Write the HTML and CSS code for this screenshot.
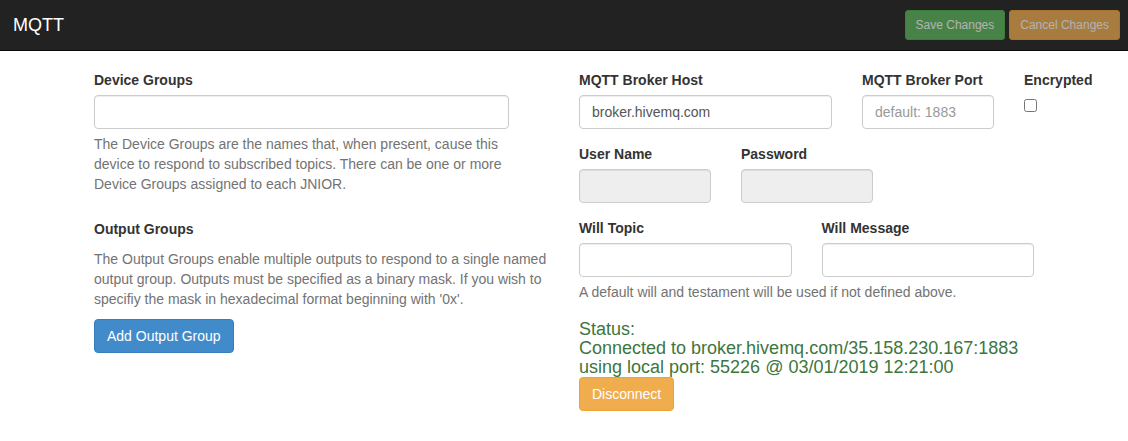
FILE: index.html
```html
<!DOCTYPE html>
<html lang="en">
<head>
  <meta charset="UTF-8" />
  <meta name="viewport" content="width=device-width, initial-scale=1.0"/>
  <title>MQTT</title>
  <link rel="stylesheet" href="styles.css">
</head>
<body>

  <header class="navbar">
    <span class="brand">MQTT</span>
    <div class="nav-actions">
      <button class="btn btn-sm btn-success" disabled>Save Changes</button>
      <button class="btn btn-sm btn-warning" disabled>Cancel Changes</button>
    </div>
  </header>

  <main class="page">
    <section class="col">
      <div class="form-group narrow">
        <label for="deviceGroups">Device Groups</label>
        <input type="text" id="deviceGroups" class="form-control">
        <p class="help-block">The Device Groups are the names that, when present, cause this device to respond to subscribed topics. There can be one or more Device Groups assigned to each JNIOR.</p>
      </div>

      <div class="form-group">
        <label>Output Groups</label>
        <p class="help-block">The Output Groups enable multiple outputs to respond to a single named output group. Outputs must be specified as a binary mask. If you wish to specifiy the mask in hexadecimal format beginning with '0x'.</p>
        <button class="btn btn-primary">Add Output Group</button>
      </div>
    </section>

    <section class="col">
      <div class="row">
        <div class="form-group w-host">
          <label for="host">MQTT Broker Host</label>
          <input type="text" id="host" class="form-control" value="broker.hivemq.com">
        </div>
        <div class="form-group w-small">
          <label for="port">MQTT Broker Port</label>
          <input type="text" id="port" class="form-control" placeholder="default: 1883">
        </div>
        <div class="form-group w-check">
          <label for="encrypted">Encrypted</label>
          <input type="checkbox" id="encrypted" class="check">
        </div>
      </div>

      <div class="row">
        <div class="form-group w-small">
          <label for="user">User Name</label>
          <input type="text" id="user" class="form-control" readonly>
        </div>
        <div class="form-group w-small">
          <label for="pass">Password</label>
          <input type="password" id="pass" class="form-control" readonly>
        </div>
      </div>

      <div class="form-group">
        <div class="row">
          <div class="w-half">
            <label for="willTopic">Will Topic</label>
            <input type="text" id="willTopic" class="form-control">
          </div>
          <div class="w-half">
            <label for="willMessage">Will Message</label>
            <input type="text" id="willMessage" class="form-control">
          </div>
        </div>
        <p class="help-block">A default will and testament will be used if not defined above.</p>
      </div>

      <div class="status">
        Status:<br>
        Connected to broker.hivemq.com/35.158.230.167:1883<br>
        using local port: 55226 @ 03/01/2019 12:21:00
      </div>
      <button class="btn btn-warning">Disconnect</button>
    </section>
  </main>

</body>
</html>
```

FILE: styles.css
```css
* {
  box-sizing: border-box;
}

body {
  margin: 0;
  font-family: "Liberation Sans", Arial, sans-serif;
  font-size: 14px;
  line-height: 20px;
  color: #333;
  background: #fff;
}

/* Top bar */
.navbar {
  height: 51px;
  background: #222;
  border-bottom: 1px solid #080808;
  display: flex;
  align-items: flex-start;
  justify-content: space-between;
  margin-bottom: 19px;
}

.brand {
  color: #fff;
  font-size: 18px;
  line-height: 20px;
  padding: 15px 13px;
}

.nav-actions {
  display: flex;
  gap: 4px;
  padding: 10px 8px 0 0;
}

/* Buttons */
.btn {
  display: inline-block;
  font-family: inherit;
  font-size: 14px;
  line-height: 20px;
  padding: 6px 12px;
  border: 1px solid transparent;
  border-radius: 4px;
  color: #fff;
  cursor: pointer;
}

.btn-sm {
  font-size: 12px;
  line-height: 18px;
  padding: 5px 10px;
  border-radius: 3px;
}

.btn[disabled] {
  opacity: 0.65;
  cursor: not-allowed;
}

.btn-primary {
  background: #428bca;
  border-color: #357ebd;
}

.btn-success {
  background: #5cb85c;
  border-color: #4cae4c;
}

.btn-warning {
  background: #f0ad4e;
  border-color: #eea236;
}

/* Layout */
.page {
  width: 940px;
  margin: 0 auto;
  display: flex;
  gap: 30px;
}

.col {
  width: 455px;
}

.row {
  display: flex;
  gap: 30px;
}

.narrow { width: 415px; display: flow-root; }
.w-host { width: 253px; }
.w-small { width: 132px; }
.w-half { width: 213px; }
.w-check { width: 10px; white-space: nowrap; }

/* Form */
.form-group {
  margin-bottom: 15px;
}

label {
  display: inline-block;
  font-weight: bold;
  margin-bottom: 5px;
}

.form-control {
  display: block;
  width: 100%;
  height: 34px;
  padding: 6px 12px;
  font-family: inherit;
  font-size: 14px;
  line-height: 20px;
  color: #555;
  background: #fff;
  border: 1px solid #ccc;
  border-radius: 4px;
  box-shadow: inset 0 1px 1px rgba(0,0,0,0.075);
}

.form-control::placeholder {
  color: #999;
}

.form-control[readonly] {
  background: #eee;
}

.check {
  display: block;
  width: 13px;
  height: 13px;
  margin: 4px 0 0;
}

.help-block {
  margin: 5px 0 10px;
  color: #737373;
}

.status {
  color: #3c763d;
  font-size: 18px;
  line-height: 19px;
  padding-top: 3px;
}
```
